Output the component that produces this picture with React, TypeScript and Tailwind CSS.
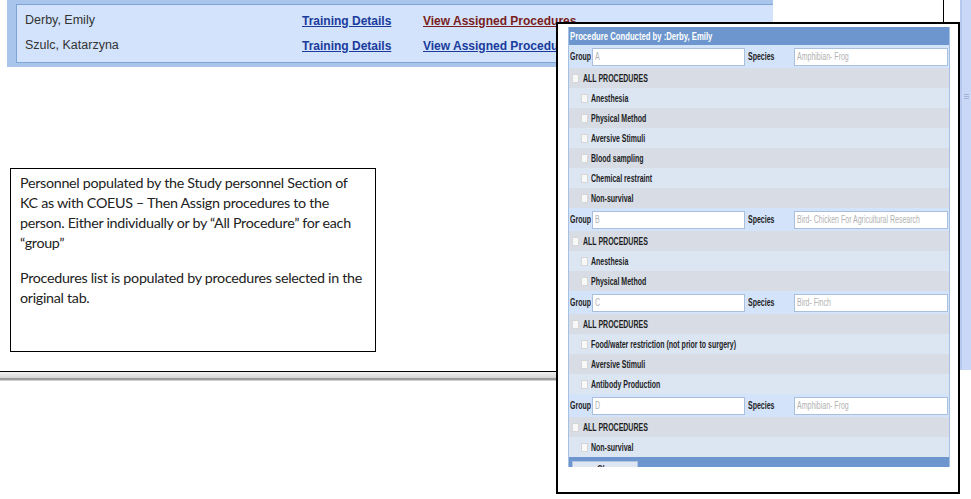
import React from "react";

type Proc = { label: string; all?: boolean };

const GROUPS: { group: string; species: string; procs: string[] }[] = [
  {
    group: "A",
    species: "Amphibian- Frog",
    procs: ["Anesthesia", "Physical Method", "Aversive Stimuli", "Blood sampling", "Chemical restraint", "Non-survival"],
  },
  {
    group: "B",
    species: "Bird- Chicken For Agricultural Research",
    procs: ["Anesthesia", "Physical Method"],
  },
  {
    group: "C",
    species: "Bird- Finch",
    procs: ["Food/water restriction (not prior to surgery)", "Aversive Stimuli", "Antibody Production"],
  },
  {
    group: "D",
    species: "Amphibian- Frog",
    procs: ["Non-survival"],
  },
];

const PEOPLE = [
  { name: "Derby, Emily", visited: true },
  { name: "Szulc, Katarzyna", visited: false },
];

// the popup screenshot is squashed sideways, so its text is narrowed
function Squeeze({ children, className = "" }: { children: React.ReactNode; className?: string }) {
  return <span className={`block origin-left scale-x-[0.7] whitespace-nowrap leading-none ${className}`}>{children}</span>;
}

function FakeInput({ value, width }: { value: string; width: string }) {
  return (
    <div className={`${width} h-[18px] bg-white border border-[#a9bfdc] flex items-center pl-[2px] pt-[1px] overflow-hidden`}>
      <Squeeze className="text-[10px] text-[#b2b2b2]">{value}</Squeeze>
    </div>
  );
}

function ProcRow({ proc, index }: { proc: Proc; index: number }) {
  const bg = index % 2 === 0 ? "bg-[#d7dce5]" : "bg-[#dce6f3]";
  return (
    <div className={`flex items-center h-[20px] ${bg} ${proc.all ? "pl-[3px]" : "pl-[12px]"}`}>
      <div className="w-[7px] h-[9px] bg-[#f8f8f8] border border-[#d6d6d6] shrink-0" />
      <div className={`flex items-center pt-[2px] ${proc.all ? "ml-[4px]" : "ml-[3px]"}`}>
        <Squeeze className="text-[10px] font-bold text-[#1e1e1e]">{proc.label}</Squeeze>
      </div>
    </div>
  );
}

function ProcedurePopup() {
  return (
    <div className="absolute left-[556px] top-[22px] w-[404px] h-[472px] border-2 border-black bg-white">
      <div className="ml-[10px] mt-[3px] w-[382px] h-[440px] overflow-hidden border-x border-[#a6c0e4] flex flex-col">
        {/* header */}
        <div className="h-[18px] shrink-0 bg-[#6c96cd] flex items-center pl-[1px] pt-[1px]">
          <Squeeze className="text-[11px] font-bold text-white">Procedure Conducted by :Derby, Emily</Squeeze>
        </div>
        {GROUPS.map((g) => {
          const rows: Proc[] = [{ label: "ALL PROCEDURES", all: true }, ...g.procs.map((p) => ({ label: p }))];
          return (
            <div key={g.group} className="flex flex-col shrink-0">
              <div className="h-[23px] bg-[#d3e3f9] flex items-center pl-[1px]">
                <div className="w-[22px] flex items-center pt-[1px]">
                  <Squeeze className="text-[10px] font-bold text-[#1e1e1e]">Group</Squeeze>
                </div>
                <FakeInput value={g.group} width="w-[153px]" />
                <div className="w-[46px] ml-[3px] flex items-center pt-[1px]">
                  <Squeeze className="text-[10px] font-bold text-[#1e1e1e]">Species</Squeeze>
                </div>
                <FakeInput value={g.species} width="w-[154px]" />
              </div>
              {rows.map((r, i) => (
                <ProcRow key={r.label + i} proc={r} index={i} />
              ))}
            </div>
          );
        })}
        {/* footer bar, cut off by the screenshot */}
        <div className="h-[30px] shrink-0 bg-[#6c96cd] pl-[3px] pt-[4px]">
          <div className="w-[66px] h-[18px] bg-[#dfe6f3] border border-[#b4c5df] flex justify-center pt-[2px] pl-[14px]">
            <Squeeze className="text-[11px] font-bold text-[#333]">Close</Squeeze>
          </div>
        </div>
      </div>
    </div>
  );
}

function PersonnelTable() {
  return (
    <div className="absolute left-[7px] top-0 w-[766px] h-[67px] bg-[#a9c5eb] pl-[9px] pt-[4px] pb-[4px]">
      <div className="h-full bg-[#d2e3fb] border-l border-t border-b border-[#7ea3d6] pt-[3px] pl-[8px]">
        {PEOPLE.map((p) => (
          <div key={p.name} className="flex items-center h-[25px]">
            <div className="w-[277px] text-[12.5px] text-[#333]">{p.name}</div>
            <div className="w-[121px] text-[12px] font-bold underline text-[#1a3b9c]">Training Details</div>
            <div className={`text-[12px] font-bold underline whitespace-nowrap ${p.visited ? "text-[#7a1d1d]" : "text-[#1a3b9c]"}`}>
              View Assigned Procedures
            </div>
          </div>
        ))}
      </div>
    </div>
  );
}

function NoteBox() {
  return (
    <div className="absolute left-[10px] top-[168px] w-[366px] h-[184px] border border-black bg-white px-[9px] pt-[4px] font-['Lato',sans-serif] text-[14.3px] leading-[20px] text-[#222] tracking-[-0.3px]">
      <p>
        Personnel populated by the Study personnel Section of
        <br />
        KC as with COEUS – Then Assign procedures to the
        <br />
        person. Either individually or by “All Procedure” for each
        <br />
        “group”
      </p>
      <p className="mt-[15px]">
        Procedures list is populated by procedures selected in the
        <br />
        original tab.
      </p>
    </div>
  );
}

export default function App() {
  return (
    <div className="relative w-[971px] h-[499px] bg-white overflow-hidden font-['Liberation_Sans',Arial,sans-serif]">
      <PersonnelTable />

      {/* separator line of the slide */}
      <div className="absolute left-0 top-[371px] w-[560px] flex flex-col">
        <div className="h-px bg-black" />
        <div className="h-[6px] bg-gradient-to-b from-[#f0f0f0] to-[#d4d4d4]" />
        <div className="h-[2px] bg-[#9a9a9a]" />
        <div className="h-px bg-[#d0d0d0]" />
      </div>

      {/* edge of a window behind */}
      <div className="absolute left-[943px] top-0 w-px h-[23px] bg-black" />
      <div className="absolute left-[960px] top-0 w-[11px] h-[370px] bg-[#c9d8f7] border-l-2 border-[#b7c9ee] pt-[94px] pl-[2px]">
        <div className="w-[5px] flex flex-col gap-[1px]">
          <div className="h-px bg-[#9fb3d8]" />
          <div className="h-px bg-[#9fb3d8]" />
          <div className="h-px bg-[#9fb3d8]" />
        </div>
      </div>

      <NoteBox />
      <ProcedurePopup />
    </div>
  );
}
